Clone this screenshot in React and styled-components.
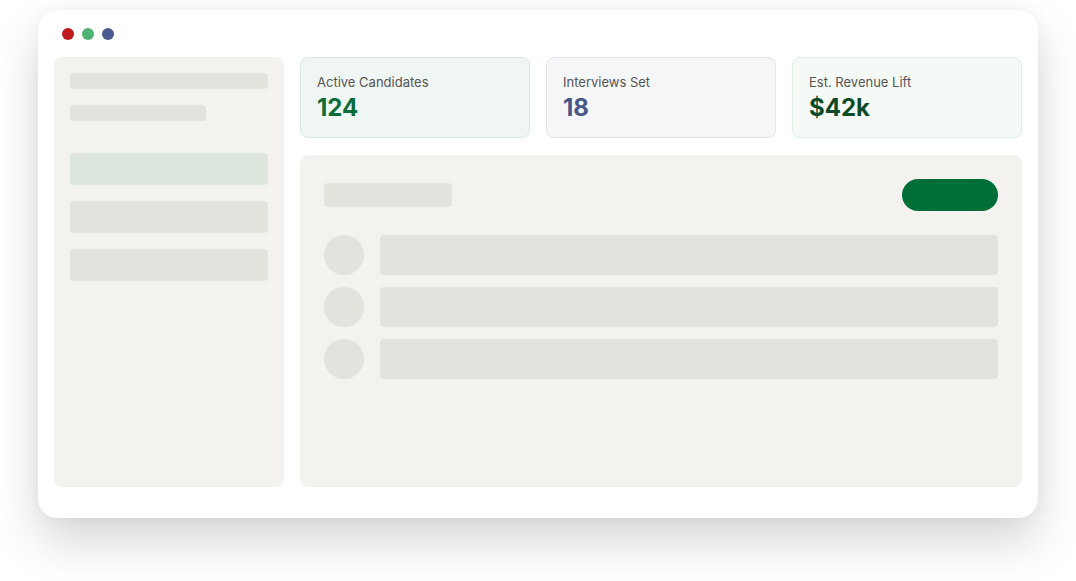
import React from "react";
import styled, { createGlobalStyle } from "styled-components";

const GlobalStyle = createGlobalStyle`
  html, body {
    margin: 0;
    padding: 0;
    background: #ffffff;
    font-family: Inter, "Noto Sans", "Liberation Sans", sans-serif;
  }
`;

const stats = [
  { label: "Active Candidates", value: "124", tone: "green" },
  { label: "Interviews Set", value: "18", tone: "slate" },
  { label: "Est. Revenue Lift", value: "$42k", tone: "mint" },
];

const tones = {
  green: { bg: "#f0f6f3", border: "#d9e9e0", color: "#0b6d39" },
  slate: { bg: "#f5f6f8", border: "#e2e4e9", color: "#4a5789" },
  mint: { bg: "#f5faf6", border: "#ddefe3", color: "#0c4a28" },
};

function App() {
  return (
    <>
      <GlobalStyle />
      <Page>
        <Window>
          <TitleBar>
            <Dot color="#bf1a1d" />
            <Dot color="#4db272" />
            <Dot color="#4b5a91" />
          </TitleBar>
          <Body>
            <Sidebar>
              <Skeleton width="198px" height="16px" />
              <Skeleton width="136px" height="16px" />
              <NavList>
                <NavItem active />
                <NavItem />
                <NavItem />
              </NavList>
            </Sidebar>
            <Main>
              <StatRow>
                {stats.map((s) => (
                  <StatCard key={s.label} tone={s.tone}>
                    <StatLabel>{s.label}</StatLabel>
                    <StatValue tone={s.tone}>{s.value}</StatValue>
                  </StatCard>
                ))}
              </StatRow>
              <Panel>
                <PanelHeader>
                  <Skeleton width="128px" height="24px" />
                  <PillButton />
                </PanelHeader>
                <RowList>
                  {[0, 1, 2].map((i) => (
                    <Row key={i}>
                      <Avatar />
                      <RowBar />
                    </Row>
                  ))}
                </RowList>
              </Panel>
            </Main>
          </Body>
        </Window>
      </Page>
    </>
  );
}

const Page = styled.div`
  padding: 10px 38px 70px;
`;

const Window = styled.div`
  width: 1000px;
  height: 508px;
  box-sizing: border-box;
  background: #ffffff;
  border-radius: 20px;
  padding: 18px 16px 0;
  box-shadow: 0 24px 48px rgba(0, 0, 0, 0.16),
    0 0 20px rgba(0, 0, 0, 0.04);
`;

const TitleBar = styled.div`
  display: flex;
  gap: 8px;
  padding-left: 8px;
  height: 12px;
  margin-bottom: 17px;
`;

const Dot = styled.span`
  width: 12px;
  height: 12px;
  border-radius: 50%;
  background: ${(p) => p.color};
`;

const Body = styled.div`
  display: grid;
  grid-template-columns: 230px 722px;
  gap: 16px;
  height: 430px;
`;

const Sidebar = styled.div`
  background: #f3f2ee;
  border-radius: 8px;
  padding: 16px;
  display: flex;
  flex-direction: column;
  gap: 16px;
`;

const Skeleton = styled.div`
  width: ${(p) => p.width};
  height: ${(p) => p.height};
  background: #e3e2dd;
  border-radius: 4px;
`;

const NavList = styled.div`
  display: flex;
  flex-direction: column;
  gap: 16px;
  margin-top: 16px;
`;

const NavItem = styled.div`
  height: 32px;
  border-radius: 4px;
  background: ${(p) => (p.active ? "#dce6dd" : "#e3e2dd")};
`;

const Main = styled.div`
  display: flex;
  flex-direction: column;
  gap: 17px;
`;

const StatRow = styled.div`
  display: grid;
  grid-template-columns: repeat(3, 230px);
  gap: 16px;
`;

const StatCard = styled.div`
  height: 81px;
  box-sizing: border-box;
  padding: 16px 16px 0;
  border-radius: 8px;
  background: ${(p) => tones[p.tone].bg};
  border: 1px solid ${(p) => tones[p.tone].border};
`;

const StatLabel = styled.div`
  font-size: 13px;
  line-height: 16px;
  color: #555555;
`;

const StatValue = styled.div`
  margin-top: 3px;
  font-size: 24px;
  line-height: 29px;
  font-weight: 700;
  color: ${(p) => tones[p.tone].color};
`;

const Panel = styled.div`
  flex: 1;
  background: #f3f2ee;
  border-radius: 8px;
  padding: 24px;
`;

const PanelHeader = styled.div`
  display: flex;
  align-items: center;
  justify-content: space-between;
  height: 32px;
  margin-bottom: 24px;
`;

const PillButton = styled.div`
  width: 96px;
  height: 32px;
  border-radius: 16px;
  background: #006e37;
`;

const RowList = styled.div`
  display: flex;
  flex-direction: column;
  gap: 12px;
`;

const Row = styled.div`
  display: flex;
  align-items: center;
  gap: 16px;
`;

const Avatar = styled.div`
  width: 40px;
  height: 40px;
  border-radius: 50%;
  background: #e3e2dd;
  flex-shrink: 0;
`;

const RowBar = styled.div`
  flex: 1;
  height: 40px;
  border-radius: 4px;
  background: #e3e2dd;
`;

export default App;
